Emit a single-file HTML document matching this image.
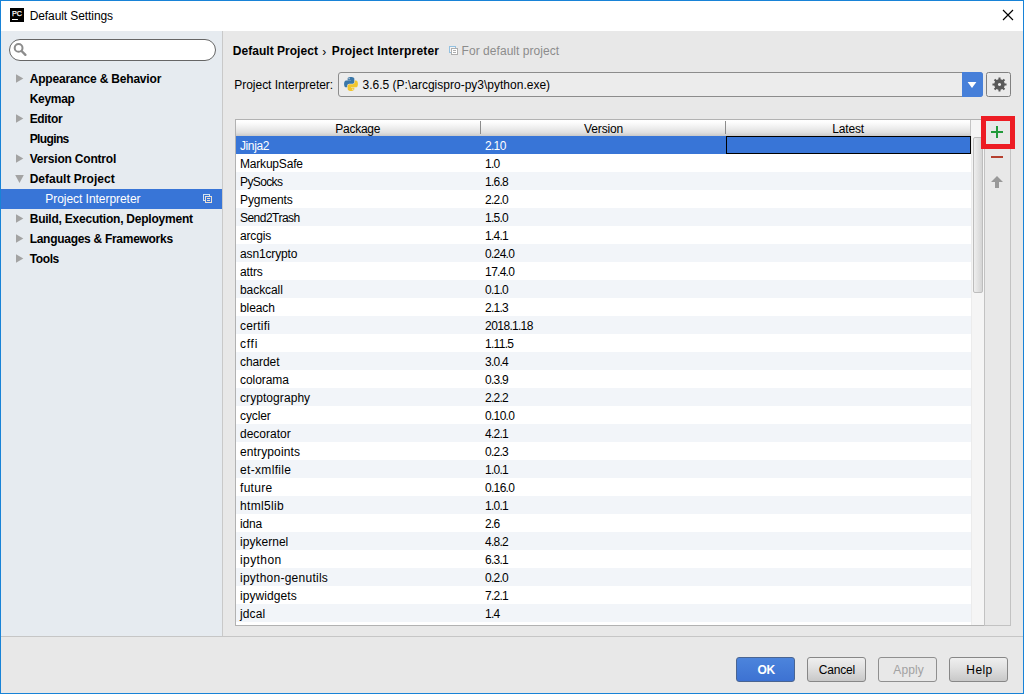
<!DOCTYPE html>
<html><head><meta charset="utf-8"><title>Default Settings</title>
<style>
*{box-sizing:border-box;margin:0;padding:0}
html,body{width:1024px;height:694px;overflow:hidden;background:#e8e8e8}
body{font-family:"Liberation Sans",sans-serif;font-size:12px;color:#000;position:relative}
.abs{position:absolute}
.x{position:absolute;white-space:pre;font-size:12px}
.d{margin:0 -0.27px}
#win{position:absolute;left:0;top:0;width:1024px;height:694px;border:1px solid #1883d7}
#title{position:absolute;left:1px;top:1px;width:1022px;height:30px;background:#fff}
#side{position:absolute;left:1px;top:31px;width:221px;height:605px;background:#e6ebf0}
#sideb{position:absolute;left:222px;top:31px;width:1px;height:605px;background:#c9c9c9}
#search{position:absolute;left:9px;top:39px;width:207px;height:22px;border:1px solid #666;border-radius:11px;background:#fff}
#selrow{position:absolute;left:1px;top:189px;width:221px;height:20px;background:#3875d7}
#hsep{position:absolute;left:1px;top:636px;width:1022px;height:1px;background:#c6c6c6}
.btn{position:absolute;top:657px;width:59px;height:25px;border:1px solid #878787;border-radius:3px;background:linear-gradient(#efefef,#e2e2e2 40%,#c8c8c8)}
#bok{left:736px;background:linear-gradient(#4c84dc,#3d72d2);border-color:#4a6592}
#bcancel{left:807px}
#bapply{left:878px;border-color:#8f8f8f;background:#e8e8e8}
#bhelp{left:949px}
#combo{position:absolute;left:338px;top:72px;width:645px;height:25px;border:1px solid #8c8c8c;border-radius:3px;background:#ececec}
#carrow{position:absolute;left:962px;top:72px;width:21px;height:25px;background:#467fd9;border-radius:0 3px 3px 0}
#gear{position:absolute;left:986px;top:72px;width:25px;height:25px;border:1px solid #808080;border-radius:2.5px;background:#eaeaea}
#tbl{position:absolute;left:235px;top:119px;width:749px;height:507px;border:1px solid #b2b2b2;border-right:none;background:#fff}
#th{position:absolute;left:236px;top:120px;width:735px;height:16px;background:linear-gradient(#ffffff,#fdfdfd 15%,#f0f0f0 45%,#dfdfdf 80%,#c9c9c9)}
.csep{position:absolute;top:121px;width:1px;height:13px;background:#8c8c8c}
#corner{position:absolute;left:970px;top:120px;width:14px;height:16px;background:#f5f5f5;border-left:1px solid #c4c4c4}
#selr{position:absolute;left:236px;top:136px;width:735px;height:18px;background:#3875d7}
#focus{position:absolute;left:726px;top:136px;width:245px;height:18px;border:1px solid #000}
.odd{position:absolute;left:236px;width:735px;height:18px;background:#f2f5f9}
#sb{position:absolute;left:971px;top:136px;width:13px;height:489px;background:#f5f5f5;border-left:1px solid #ececec}
#thumb{position:absolute;left:973px;top:137px;width:10px;height:156px;border:1px solid #bdbdbd;border-radius:2px;background:linear-gradient(90deg,#eeeeee,#d4d4d4)}
#tool{position:absolute;left:984px;top:119px;width:27px;height:507px;border:1px solid #c2c2c2;background:#e8e8e8}
#red{position:absolute;left:981px;top:116px;width:34px;height:33px;border:5px solid #ed1c24}
</style></head><body>
<div id="title"></div>
<svg class="abs" style="left:10px;top:8px" width="14" height="14" viewBox="0 0 14 14"><rect width="14" height="14" fill="#000"/><text x="1.9" y="7.9" font-family="Liberation Sans" font-size="7.6" fill="#fff" stroke="#fff" stroke-width="0.25" textLength="10" lengthAdjust="spacingAndGlyphs">PC</text><rect x="2" y="11" width="5.9" height="1" fill="#fff"/></svg>
<svg class="abs" style="left:1002px;top:9px" width="12" height="12" viewBox="0 0 12 12"><path d="M1 1L11 11M11 1L1 11" stroke="#000" stroke-width="1.15" fill="none"/></svg>
<div id="side"></div><div id="sideb"></div>
<div id="search"></div>
<svg class="abs" style="left:13px;top:42px" width="15" height="15" viewBox="0 0 15 15"><circle cx="5.6" cy="5.9" r="3.9" fill="none" stroke="#8c8c8c" stroke-width="2"/><path d="M8.6 9L12.4 12.8" stroke="#8c8c8c" stroke-width="2.4" stroke-linecap="round"/></svg>
<div id="selrow"></div>
<svg class="abs" style="left:203px;top:194px" width="9" height="9" viewBox="0 0 9 9" fill="none" stroke-width="1"><rect x="0.5" y="0.5" width="6" height="6" stroke="#cfe4f4"/><rect x="2.5" y="2.5" width="6" height="6" stroke="#eadfd3" fill="#3875d7"/><path d="M4 4.5H7M4 6.5H7" stroke="#eadfd3"/></svg>
<svg class="abs" style="left:16px;top:74px" width="8" height="9" viewBox="0 0 8 9"><path d="M0 0.3L7.3 4.5L0 8.7z" fill="#a3a3a3"/></svg>
<svg class="abs" style="left:16px;top:114px" width="8" height="9" viewBox="0 0 8 9"><path d="M0 0.3L7.3 4.5L0 8.7z" fill="#a3a3a3"/></svg>
<svg class="abs" style="left:16px;top:154px" width="8" height="9" viewBox="0 0 8 9"><path d="M0 0.3L7.3 4.5L0 8.7z" fill="#a3a3a3"/></svg>
<svg class="abs" style="left:16px;top:214px" width="8" height="9" viewBox="0 0 8 9"><path d="M0 0.3L7.3 4.5L0 8.7z" fill="#a3a3a3"/></svg>
<svg class="abs" style="left:16px;top:234px" width="8" height="9" viewBox="0 0 8 9"><path d="M0 0.3L7.3 4.5L0 8.7z" fill="#a3a3a3"/></svg>
<svg class="abs" style="left:16px;top:254px" width="8" height="9" viewBox="0 0 8 9"><path d="M0 0.3L7.3 4.5L0 8.7z" fill="#a3a3a3"/></svg>
<svg class="abs" style="left:15px;top:175px" width="9" height="8" viewBox="0 0 9 8"><path d="M0.2 0h8.6L4.5 8z" fill="#a3a3a3"/></svg>
<svg class="abs" style="left:449px;top:46px" width="9" height="9" viewBox="0 0 9 9" fill="none" stroke-width="1"><rect x="0.5" y="0.5" width="6" height="6" stroke="#93c1e1" fill="#f4f4f4"/><rect x="2.5" y="2.5" width="6" height="6" stroke="#adadad" fill="#fff"/><path d="M4 4.5H7M4 6.5H7" stroke="#adadad"/></svg>
<div id="combo"></div><div id="carrow"></div>
<svg class="abs" style="left:967px;top:82px" width="10" height="6" viewBox="0 0 10 6"><path d="M0.6 0h8.8L5 6z" fill="#fff"/></svg>
<svg class="abs" style="left:344px;top:77px" width="14" height="14" viewBox="0 0 111.2 112.4"><path fill="#3b77a8" d="M54.918785,9.1927389e-4 C50.335132,0.02221727 45.957846,0.41313697 42.106285,1.0946693 30.760069,3.0991731 28.700036,7.2947714 28.700035,15.032169 L28.700035,25.250919 L55.512535,25.250919 L55.512535,28.657169 L28.700035,28.657169 L18.637535,28.657169 C10.845076,28.657169 4.0217762,33.340886 1.8875352,42.250919 C-0.57429765,52.463885 -0.68350375,58.836942 1.8875352,69.500919 C3.7934635,77.438771 8.3450784,83.094667 16.137535,83.094669 L25.356285,83.094669 L25.356285,70.844669 C25.356285,61.994767 33.013429,54.188421 42.106285,54.188419 L68.887535,54.188419 C76.342486,54.188419 82.293788,48.050255 82.293785,40.563419 L82.293785,15.032169 C82.293785,7.7658304 76.163805,2.3073919 68.887535,1.0946693 C64.281548,0.32794397 59.502438,-0.02037903 54.918785,9.1927389e-4 Z M40.418785,8.2196693 C43.188318,8.2196693 45.450035,10.518356 45.450035,13.344669 C45.450033,16.160961 43.188318,18.438419 40.418785,18.438419 C37.639321,18.438419 35.387537,16.160961 35.387535,13.344669 C35.387535,10.518357 37.639321,8.2196693 40.418785,8.2196693 Z"/><path fill="#f2c62e" d="M85.637535,28.657169 L85.637535,40.563419 C85.637535,49.794043 77.811812,57.563417 68.887535,57.563419 L42.106285,57.563419 C34.770394,57.563419 28.700035,63.841932 28.700035,71.188419 L28.700035,96.719669 C28.700035,103.98601 35.018562,108.25992 42.106285,110.34467 C50.593709,112.84032 58.732724,113.29136 68.887535,110.34467 C75.637747,108.39028 82.293785,104.45712 82.293785,96.719669 L82.293785,86.500919 L55.512535,86.500919 L55.512535,83.094669 L82.293785,83.094669 L95.700035,83.094669 C103.49249,83.094669 106.39625,77.659237 109.10628,69.500919 C111.90562,61.102013 111.78651,53.025104 109.10628,42.250919 C107.18047,34.493494 103.50241,28.657169 95.700035,28.657169 L85.637535,28.657169 Z M70.575035,93.313419 C73.354499,93.313419 75.606285,95.590879 75.606285,98.407169 C75.606283,101.23348 73.354499,103.53217 70.575035,103.53217 C67.805502,103.53217 65.543785,101.23348 65.543785,98.407169 C65.543787,95.590879 67.805502,93.313419 70.575035,93.313419 Z"/></svg>
<div id="gear"></div>
<svg class="abs" style="left:991.5px;top:77.4px" width="15" height="15" viewBox="0 0 15 15"><path fill="#595959" fill-rule="evenodd" d="M12.57 5.94L12.69 6.43L14.53 6.50L14.53 8.50L12.69 8.57L12.18 9.98L11.93 10.41L13.18 11.76L11.76 13.18L10.41 11.93L9.06 12.57L8.57 12.69L8.50 14.53L6.50 14.53L6.43 12.69L5.02 12.18L4.59 11.93L3.24 13.18L1.82 11.76L3.07 10.41L2.43 9.06L2.31 8.57L0.47 8.50L0.47 6.50L2.31 6.43L2.82 5.02L3.07 4.59L1.82 3.24L3.24 1.82L4.59 3.07L5.94 2.43L6.43 2.31L6.50 0.47L8.50 0.47L8.57 2.31L9.98 2.82L10.41 3.07L11.76 1.82L13.18 3.24L11.93 4.59Z M7.5 5.9a1.6 1.6 0 1 0 0.001 0z"/></svg>
<div id="tbl"></div>
<div id="th"></div><div class="csep" style="left:480px"></div><div class="csep" style="left:725px"></div><div id="corner"></div>
<div id="selr"></div><div id="focus"></div>
<div class="odd" style="top:172px"></div>
<div class="odd" style="top:208px"></div>
<div class="odd" style="top:244px"></div>
<div class="odd" style="top:280px"></div>
<div class="odd" style="top:316px"></div>
<div class="odd" style="top:352px"></div>
<div class="odd" style="top:388px"></div>
<div class="odd" style="top:424px"></div>
<div class="odd" style="top:460px"></div>
<div class="odd" style="top:496px"></div>
<div class="odd" style="top:532px"></div>
<div class="odd" style="top:568px"></div>
<div class="odd" style="top:604px"></div>
<div id="sb"></div><div id="thumb"></div>
<div id="tool"></div>
<svg class="abs" style="left:991px;top:126px" width="12" height="12" viewBox="0 0 12 12"><path d="M5 0h2v5h5v2h-5v5h-2v-5h-5v-2h5z" fill="#229a3b"/></svg>
<div class="abs" style="left:991px;top:156px;width:12px;height:2px;background:#b5402f"></div>
<svg class="abs" style="left:991px;top:176px" width="12" height="12" viewBox="0 0 12 12"><path d="M6 0L12 6H8V12H4V6H0z" fill="#999"/></svg>
<div id="red"></div>
<div id="hsep"></div>
<div class="btn" id="bok"></div><div class="btn" id="bcancel"></div><div class="btn" id="bapply"></div><div class="btn" id="bhelp"></div>
<span class="x" style="left:29.65px;top:8px;line-height:16px;letter-spacing:-0.083px;">Default Settings</span>
<span class="x" style="left:29.70px;top:69px;line-height:20px;letter-spacing:-0.188px;font-weight:bold;">Appearance &amp; Behavior</span>
<span class="x" style="left:29.70px;top:89px;line-height:20px;letter-spacing:-0.300px;font-weight:bold;">Keymap</span>
<span class="x" style="left:29.70px;top:109px;line-height:20px;letter-spacing:-0.350px;font-weight:bold;">Editor</span>
<span class="x" style="left:29.70px;top:129px;line-height:20px;letter-spacing:-0.625px;font-weight:bold;">Plugins</span>
<span class="x" style="left:29.70px;top:149px;line-height:20px;letter-spacing:-0.196px;font-weight:bold;">Version Control</span>
<span class="x" style="left:29.70px;top:169px;line-height:20px;letter-spacing:0.018px;font-weight:bold;">Default Project</span>
<span class="x" style="left:29.70px;top:209px;line-height:20px;letter-spacing:-0.222px;font-weight:bold;">Build, Execution, Deployment</span>
<span class="x" style="left:29.70px;top:229px;line-height:20px;letter-spacing:-0.286px;font-weight:bold;">Languages &amp; Frameworks</span>
<span class="x" style="left:29.70px;top:249px;line-height:20px;letter-spacing:-0.375px;font-weight:bold;">Tools</span>
<span class="x" style="left:45.25px;top:189px;line-height:20px;letter-spacing:-0.042px;color:#fff;">Project Interpreter</span>
<span class="x" style="left:232.80px;top:43px;line-height:16px;letter-spacing:0.029px;font-weight:bold;">Default Project</span>
<span class="x" style="left:322.25px;top:44px;line-height:16px;letter-spacing:0.000px;">›</span>
<span class="x" style="left:331.75px;top:43px;line-height:16px;letter-spacing:0.175px;font-weight:bold;">Project Interpreter</span>
<span class="x" style="left:461.60px;top:43px;line-height:16px;letter-spacing:0.045px;color:#8c8c8c;">For default project</span>
<span class="x" style="left:234.25px;top:77px;line-height:16px;letter-spacing:-0.024px;">Project Interpreter:</span>
<span class="x" style="left:362.50px;top:77px;line-height:16px;letter-spacing:0.005px;">3.6.5 (P:\arcgispro-py3\python.exe)</span>
<span class="x" style="left:335.25px;top:121px;line-height:16px;letter-spacing:-0.250px;">Package</span>
<span class="x" style="left:584.05px;top:121px;line-height:16px;letter-spacing:-0.142px;">Version</span>
<span class="x" style="left:832.35px;top:121px;line-height:16px;letter-spacing:-0.200px;">Latest</span>
<span class="x" style="left:757.50px;top:662px;line-height:16px;letter-spacing:-0.300px;font-weight:bold;color:#fff;">OK</span>
<span class="x" style="left:818.85px;top:662px;line-height:16px;letter-spacing:-0.190px;">Cancel</span>
<span class="x" style="left:893.35px;top:662px;line-height:16px;letter-spacing:0.111px;color:#a2a2a2;">Apply</span>
<span class="x" style="left:966.35px;top:662px;line-height:16px;letter-spacing:0.384px;">Help</span>
<span class="x" style="left:240.00px;top:137px;line-height:18px;letter-spacing:-0.400px;color:#fff;">Jinja2</span>
<span class="x" style="left:485.00px;top:137px;line-height:18px;letter-spacing:-0.500px;color:#fff;">2<span class="d">.</span>10</span>
<span class="x" style="left:240.00px;top:155px;line-height:18px;letter-spacing:-0.194px;">MarkupSafe</span>
<span class="x" style="left:485.00px;top:155px;line-height:18px;letter-spacing:-0.500px;">1<span class="d">.</span>0</span>
<span class="x" style="left:240.00px;top:173px;line-height:18px;letter-spacing:-0.625px;">PySocks</span>
<span class="x" style="left:485.00px;top:173px;line-height:18px;letter-spacing:-0.500px;">1<span class="d">.</span>6<span class="d">.</span>8</span>
<span class="x" style="left:240.00px;top:191px;line-height:18px;letter-spacing:-0.071px;">Pygments</span>
<span class="x" style="left:485.00px;top:191px;line-height:18px;letter-spacing:-0.500px;">2<span class="d">.</span>2<span class="d">.</span>0</span>
<span class="x" style="left:240.00px;top:209px;line-height:18px;letter-spacing:-0.528px;">Send2Trash</span>
<span class="x" style="left:485.00px;top:209px;line-height:18px;letter-spacing:-0.500px;">1<span class="d">.</span>5<span class="d">.</span>0</span>
<span class="x" style="left:240.00px;top:227px;line-height:18px;letter-spacing:-0.150px;">arcgis</span>
<span class="x" style="left:485.00px;top:227px;line-height:18px;letter-spacing:-0.500px;">1<span class="d">.</span>4<span class="d">.</span>1</span>
<span class="x" style="left:240.00px;top:245px;line-height:18px;letter-spacing:-0.139px;">asn1crypto</span>
<span class="x" style="left:485.00px;top:245px;line-height:18px;letter-spacing:-0.500px;">0<span class="d">.</span>24<span class="d">.</span>0</span>
<span class="x" style="left:240.00px;top:263px;line-height:18px;letter-spacing:-0.125px;">attrs</span>
<span class="x" style="left:485.00px;top:263px;line-height:18px;letter-spacing:-0.500px;">17<span class="d">.</span>4<span class="d">.</span>0</span>
<span class="x" style="left:240.00px;top:281px;line-height:18px;letter-spacing:-0.071px;">backcall</span>
<span class="x" style="left:485.00px;top:281px;line-height:18px;letter-spacing:-0.500px;">0<span class="d">.</span>1<span class="d">.</span>0</span>
<span class="x" style="left:240.00px;top:299px;line-height:18px;letter-spacing:-0.100px;">bleach</span>
<span class="x" style="left:485.00px;top:299px;line-height:18px;letter-spacing:-0.500px;">2<span class="d">.</span>1<span class="d">.</span>3</span>
<span class="x" style="left:240.00px;top:317px;line-height:18px;letter-spacing:0.208px;">certifi</span>
<span class="x" style="left:485.00px;top:317px;line-height:18px;letter-spacing:-0.500px;">2018<span class="d">.</span>1<span class="d">.</span>18</span>
<span class="x" style="left:240.00px;top:335px;line-height:18px;letter-spacing:0.750px;">cffi</span>
<span class="x" style="left:485.00px;top:335px;line-height:18px;letter-spacing:-0.500px;">1<span class="d">.</span>11<span class="d">.</span>5</span>
<span class="x" style="left:240.00px;top:353px;line-height:18px;letter-spacing:-0.083px;">chardet</span>
<span class="x" style="left:485.00px;top:353px;line-height:18px;letter-spacing:-0.500px;">3<span class="d">.</span>0<span class="d">.</span>4</span>
<span class="x" style="left:240.00px;top:371px;line-height:18px;letter-spacing:-0.071px;">colorama</span>
<span class="x" style="left:485.00px;top:371px;line-height:18px;letter-spacing:-0.500px;">0<span class="d">.</span>3<span class="d">.</span>9</span>
<span class="x" style="left:240.00px;top:389px;line-height:18px;letter-spacing:0.068px;">cryptography</span>
<span class="x" style="left:485.00px;top:389px;line-height:18px;letter-spacing:-0.500px;">2<span class="d">.</span>2<span class="d">.</span>2</span>
<span class="x" style="left:240.00px;top:407px;line-height:18px;letter-spacing:-0.100px;">cycler</span>
<span class="x" style="left:485.00px;top:407px;line-height:18px;letter-spacing:-0.500px;">0<span class="d">.</span>10<span class="d">.</span>0</span>
<span class="x" style="left:240.00px;top:425px;line-height:18px;letter-spacing:0.000px;">decorator</span>
<span class="x" style="left:485.00px;top:425px;line-height:18px;letter-spacing:-0.500px;">4<span class="d">.</span>2<span class="d">.</span>1</span>
<span class="x" style="left:240.00px;top:443px;line-height:18px;letter-spacing:0.125px;">entrypoints</span>
<span class="x" style="left:485.00px;top:443px;line-height:18px;letter-spacing:-0.500px;">0<span class="d">.</span>2<span class="d">.</span>3</span>
<span class="x" style="left:240.00px;top:461px;line-height:18px;letter-spacing:0.333px;">et-xmlfile</span>
<span class="x" style="left:485.00px;top:461px;line-height:18px;letter-spacing:-0.500px;">1<span class="d">.</span>0<span class="d">.</span>1</span>
<span class="x" style="left:240.00px;top:479px;line-height:18px;letter-spacing:0.300px;">future</span>
<span class="x" style="left:485.00px;top:479px;line-height:18px;letter-spacing:-0.500px;">0<span class="d">.</span>16<span class="d">.</span>0</span>
<span class="x" style="left:240.00px;top:497px;line-height:18px;letter-spacing:0.321px;">html5lib</span>
<span class="x" style="left:485.00px;top:497px;line-height:18px;letter-spacing:-0.500px;">1<span class="d">.</span>0<span class="d">.</span>1</span>
<span class="x" style="left:240.00px;top:515px;line-height:18px;letter-spacing:-0.167px;">idna</span>
<span class="x" style="left:485.00px;top:515px;line-height:18px;letter-spacing:-0.500px;">2<span class="d">.</span>6</span>
<span class="x" style="left:240.00px;top:533px;line-height:18px;letter-spacing:0.031px;">ipykernel</span>
<span class="x" style="left:485.00px;top:533px;line-height:18px;letter-spacing:-0.500px;">4<span class="d">.</span>8<span class="d">.</span>2</span>
<span class="x" style="left:240.00px;top:551px;line-height:18px;letter-spacing:0.417px;">ipython</span>
<span class="x" style="left:485.00px;top:551px;line-height:18px;letter-spacing:-0.500px;">6<span class="d">.</span>3<span class="d">.</span>1</span>
<span class="x" style="left:240.00px;top:569px;line-height:18px;letter-spacing:0.250px;">ipython-genutils</span>
<span class="x" style="left:485.00px;top:569px;line-height:18px;letter-spacing:-0.500px;">0<span class="d">.</span>2<span class="d">.</span>0</span>
<span class="x" style="left:240.00px;top:587px;line-height:18px;letter-spacing:0.083px;">ipywidgets</span>
<span class="x" style="left:485.00px;top:587px;line-height:18px;letter-spacing:-0.500px;">7<span class="d">.</span>2<span class="d">.</span>1</span>
<span class="x" style="left:240.00px;top:605px;line-height:18px;letter-spacing:0.125px;">jdcal</span>
<span class="x" style="left:485.00px;top:605px;line-height:18px;letter-spacing:-0.500px;">1<span class="d">.</span>4</span>
<div id="win"></div>
</body></html>
